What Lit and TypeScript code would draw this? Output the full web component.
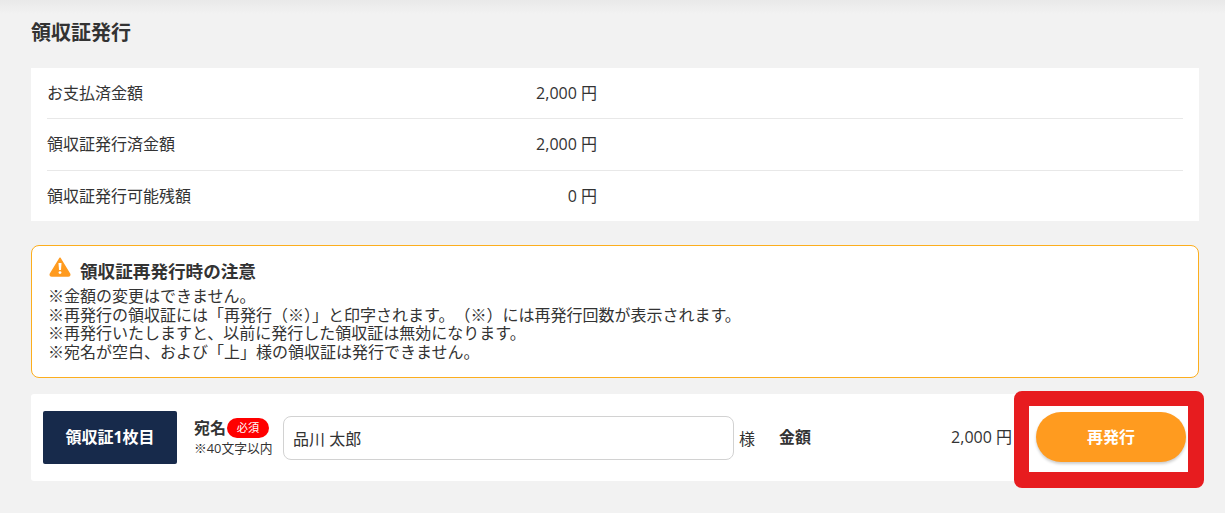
import { LitElement, html, css } from "lit";
import { customElement } from "lit/decorators.js";

const rows = [
  ["お支払済金額", "2,000 円"],
  ["領収証発行済金額", "2,000 円"],
  ["領収証発行可能残額", "0 円"],
];
const notes = [
  "※金額の変更はできません。",
  "※再発行の領収証には「再発行（※）」と印字されます。\u200b（※）には再発行回数が表示されます。",
  "※再発行いたしますと、以前に発行した領収証は無効になります。",
  "※宛名が空白、および「上」様の領収証は発行できません。",
];

@customElement("app-root")
export class AppRoot extends LitElement {
  static styles = css`
    :host {
      display: block;
      position: relative;
      width: 1225px;
      height: 513px;
      overflow: hidden;
      box-sizing: border-box;
      background: #f2f2f2;
      color: #333;
      font-family: "Open Sans", "Noto Sans CJK JP", sans-serif;
      padding: 0 26px 0 31px;
    }
    .shade {
      position: absolute;
      inset: 0 0 auto 0;
      height: 14px;
      background: linear-gradient(#e9e9e9, #f2f2f2);
    }
    h1 {
      position: relative;
      margin: 0;
      padding-top: 18px;
      height: 68px;
      box-sizing: border-box;
      font-size: 20px;
      line-height: 29px;
      font-weight: 700;
    }
    .table {
      background: #fff;
      padding: 0 16px;
      height: 153px;
      box-sizing: border-box;
      display: grid;
      grid-template-rows: 51px 52px 50px;
    }
    .row {
      display: flex;
      align-items: center;
      font-size: 16px;
      padding-bottom: 3px;
      border-bottom: 1px solid #e8e8e8;
    }
    .row:last-child {
      border-bottom: 0;
    }
    .row .label {
      width: 400px;
    }
    .row .val {
      width: 150px;
      text-align: right;
    }
    .notice {
      margin-top: 24px;
      height: 133px;
      box-sizing: border-box;
      background: #fff;
      border: 1px solid #fcae1e;
      border-radius: 8px;
      padding: 10px 16px;
      font-size: 16px;
      line-height: 18.6px;
    }
    .notice-title {
      display: flex;
      align-items: center;
      gap: 9px;
      font-size: 17.6px;
      font-weight: 700;
      line-height: 31px;
      height: 31px;
    }
    .notice-title svg {
      display: block;
      margin-top: -10px;
      margin-left: 1px;
    }
    .notice p {
      margin: 0;
    }
    .card {
      margin-top: 16px;
      height: 87px;
      background: #fff;
      border-radius: 3px;
      display: flex;
      align-items: center;
      padding: 0 12px;
    }
    .tag {
      width: 134px;
      height: 53px;
      flex: none;
      box-sizing: border-box;
      padding-bottom: 3px;
      background: #172a4b;
      color: #fff;
      border-radius: 2px;
      display: flex;
      align-items: center;
      justify-content: center;
      font-size: 16px;
      font-weight: 700;
    }
    .name {
      margin-left: 17px;
      padding-top: 1px;
      width: 89px;
      flex: none;
    }
    .name-top {
      display: flex;
      align-items: center;
      gap: 1px;
      font-size: 16px;
      font-weight: 700;
      line-height: 20px;
    }
    .req {
      width: 42px;
      height: 20px;
      border-radius: 10px;
      background: #f00;
      color: #fff;
      font-size: 11.2px;
      line-height: 20px;
      text-align: center;
      font-weight: 400;
    }
    .name-sub {
      font-size: 12.8px;
      line-height: 20px;
      white-space: nowrap;
    }
    .input {
      width: 451px;
      height: 44px;
      flex: none;
      box-sizing: border-box;
      border: 1px solid #d2d2d2;
      border-radius: 8px;
      display: flex;
      align-items: center;
      padding: 0 9px;
      font-size: 16px;
    }
    .sama {
      margin-left: 5px;
      font-size: 16px;
      width: 40px;
      flex: none;
    }
    .amount-label {
      font-size: 16px;
      font-weight: 700;
      flex: none;
      width: 62px;
      margin-bottom: 3px;
    }
    .amount {
      width: 171px;
      flex: none;
      text-align: right;
      font-size: 16px;
      margin-bottom: 3px;
    }
    .btn {
      margin-left: 24px;
      margin-bottom: 2px;
      width: 150px;
      height: 50px;
      flex: none;
      box-sizing: border-box;
      padding-bottom: 1px;
      border-radius: 25px;
      background: #ff9b1f;
      color: #fff;
      font-size: 16px;
      font-weight: 700;
      display: flex;
      align-items: center;
      justify-content: center;
      box-shadow: 0 2px 3px rgba(0, 0, 0, 0.2);
    }
    .mark {
      position: absolute;
      left: 1014px;
      top: 391px;
      width: 190px;
      height: 97px;
      box-sizing: border-box;
      border-style: solid;
      border-color: #e71c1f;
      border-width: 15px 16px 16px 15px;
      border-radius: 8px;
    }
  `;

  render() {
    return html`
      <div class="shade"></div>
      <h1>領収証発行</h1>
      <div class="table">
        ${rows.map(
          ([l, v]) => html`<div class="row"><span class="label">${l}</span><span class="val">${v}</span></div>`
        )}
      </div>
      <div class="notice">
        <div class="notice-title">
          <svg width="22" height="20" viewBox="0 0 22 20">
            <path d="M11 1.2 L20.6 16.8 Q21.4 19 19.2 19 H2.8 Q0.6 19 1.4 16.8 Z" fill="#ff9b1f" stroke="#ff9b1f" stroke-width="1.4" stroke-linejoin="round"/>
            <path d="M9.5 6 H12.5 L12 13 H10 Z" fill="#fff"/>
            <circle cx="11" cy="15.6" r="1.4" fill="#fff"/>
          </svg>
          領収証再発行時の注意
        </div>
        ${notes.map((n) => html`<p>${n}</p>`)}
      </div>
      <div class="card">
        <div class="tag">領収証1枚目</div>
        <div class="name">
          <div class="name-top">宛名<span class="req">必須</span></div>
          <div class="name-sub">※40文字以内</div>
        </div>
        <div class="input">品川 太郎</div>
        <span class="sama">様</span>
        <span class="amount-label">金額</span>
        <span class="amount">2,000 円</span>
        <div class="btn">再発行</div>
      </div>
      <div class="mark"></div>
    `;
  }
}
